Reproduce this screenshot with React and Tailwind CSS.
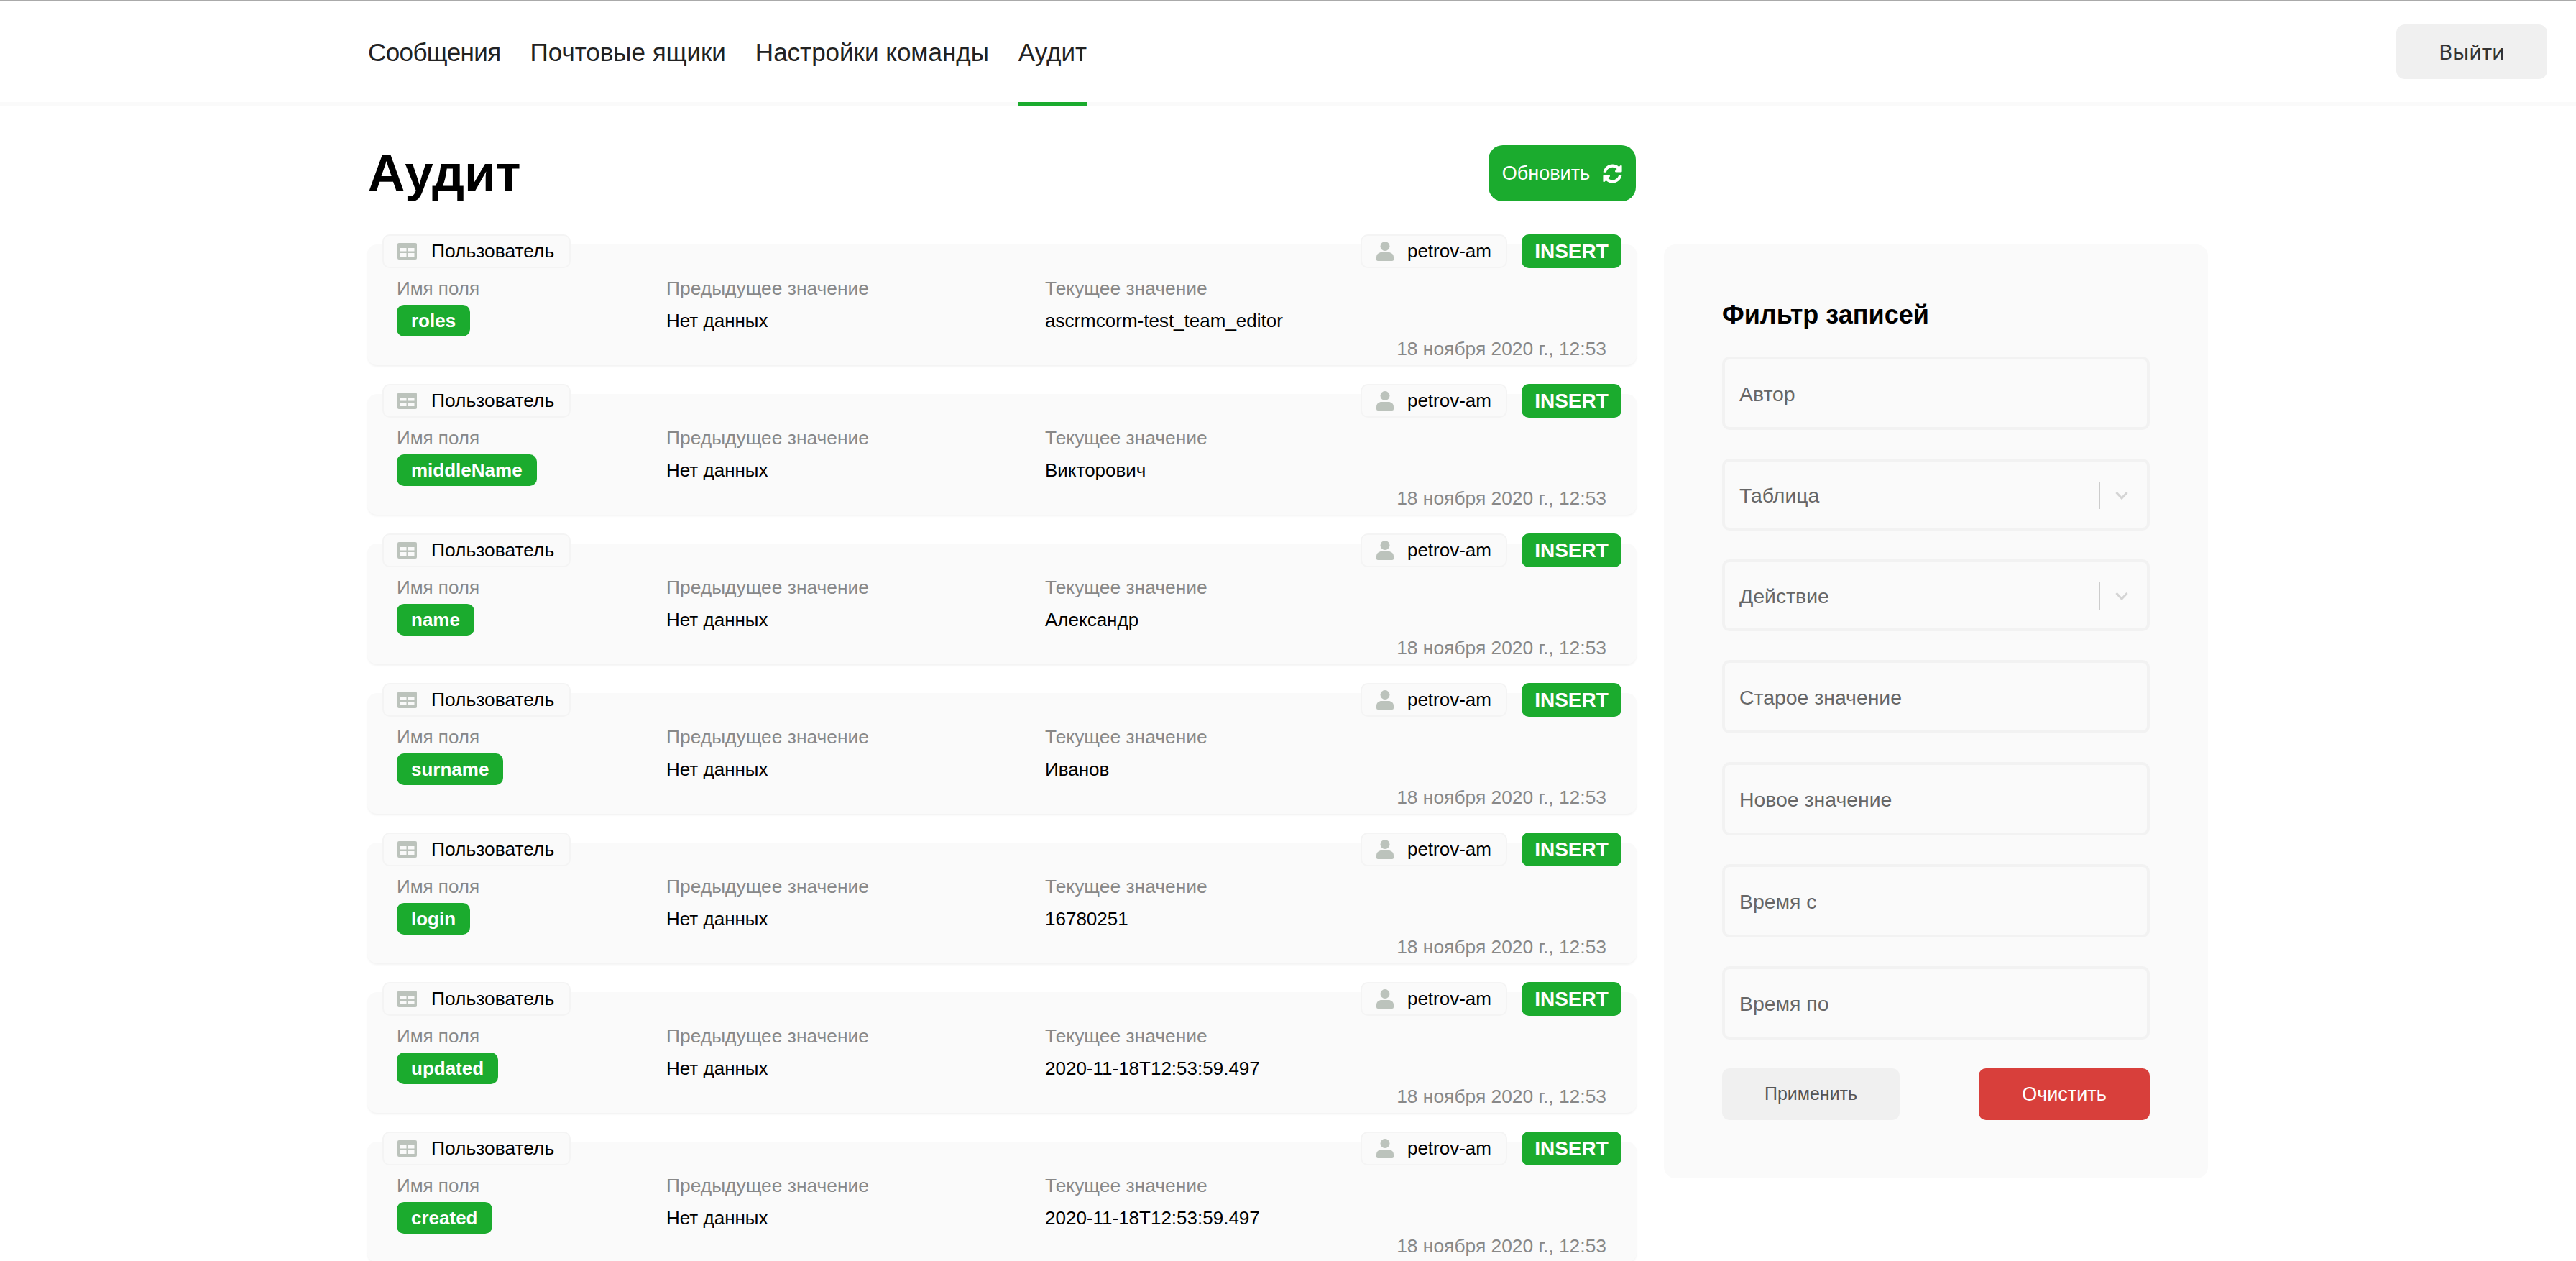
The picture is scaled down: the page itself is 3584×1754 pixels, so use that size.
import React from 'react';
import { FaSyncAlt } from 'react-icons/fa';

const rows = [
  { field: 'roles', value: 'ascrmcorm-test_team_editor' },
  { field: 'middleName', value: 'Викторович' },
  { field: 'name', value: 'Александр' },
  { field: 'surname', value: 'Иванов' },
  { field: 'login', value: '16780251' },
  { field: 'updated', value: '2020-11-18T12:53:59.497' },
  { field: 'created', value: '2020-11-18T12:53:59.497' },
];

function TableIcon() {
  return (
    <svg viewBox="0 0 27 23" className="w-[27px] h-[23px] shrink-0" fill="#bcc3bc">
      <path
        fillRule="evenodd"
        d="M2 0h23a2 2 0 0 1 2 2v19a2 2 0 0 1-2 2H2a2 2 0 0 1-2-2V2a2 2 0 0 1 2-2zM3.500 7v4.500h9V7h-9zm11 0v4.500h9V7h-9zM3.500 14v5h9v-5h-9zm11 0v5h9v-5h-9z"
      />
    </svg>
  );
}

function UserIcon() {
  return (
    <svg viewBox="0 0 24 27" className="w-[24px] h-[27px] shrink-0" fill="#bcc3bc">
      <circle cx="12" cy="6.500" r="6.500" />
      <path d="M0 22c0-5 4-7 7-7h10c3 0 7 2 7 7v3a2 2 0 0 1-2 2H2a2 2 0 0 1-2-2z" />
    </svg>
  );
}

function Chip({ children }) {
  return (
    <div className="h-[47px] flex items-center bg-[#fafafa] border-2 border-[#f4f4f4] rounded-[10px] text-[26px] text-black">
      {children}
    </div>
  );
}

function AuditRow({ field, value }) {
  return (
    <div className="h-[168px] shrink-0 bg-[#fafafa] rounded-[14px] shadow-[0_2px_3px_rgba(0,0,0,0.05)]">
      <div className="flex justify-between px-[21px] -mt-[14px]">
        <Chip>
          <div className="pl-[19px] pr-[21px] flex items-center gap-[20px] text-[26.4px]">
            <TableIcon />
            <span>Пользователь</span>
          </div>
        </Chip>
        <div className="flex gap-[20px]">
          <Chip>
            <div className="pl-[20px] pr-[20px] flex items-center gap-[19px]">
              <UserIcon />
              <span>petrov-am</span>
            </div>
          </Chip>
          <div className="w-[139px] h-[47px] flex items-center justify-center bg-[#1bab2e] rounded-[10px] text-white font-bold text-[28px]">
            INSERT
          </div>
        </div>
      </div>
      <div className="flex pl-[41px] mt-[13px] text-[26px] leading-[30px]">
        <div className="w-[375px]">
          <div className="text-[#888888]">Имя поля</div>
          <div className="mt-[8px] inline-block h-[44px] leading-[44px] px-[20px] bg-[#1bab2e] rounded-[10px] text-white font-bold">
            {field}
          </div>
        </div>
        <div className="w-[527px]">
          <div className="text-[#888888] text-[26.4px]">Предыдущее значение</div>
          <div className="mt-[15px] text-black">Нет данных</div>
        </div>
        <div>
          <div className="text-[#888888] text-[26.4px]">Текущее значение</div>
          <div className="mt-[15px] text-black">{value}</div>
        </div>
      </div>
      <div className="pr-[42px] mt-[2px] text-right text-[26.4px] leading-[30px] text-[#888888]">
        18 ноября 2020 г., 12:53
      </div>
    </div>
  );
}

function Field({ label, select, h = 'h-[102px]' }) {
  return (
    <div className={`${h} flex items-center border-4 border-[#f2f2f2] rounded-[10px] pl-[20px] pr-[26px] pt-[2px] text-[28.4px] text-[#666666]`}>
      <span className="flex-1">{label}</span>
      {select && (
        <div className="flex items-center gap-[21px]">
          <div className="w-[2px] h-[38px] bg-[#cccccc]" />
          <svg viewBox="0 0 18 12" className="w-[18px] h-[12px]" fill="none" stroke="#d4d4d4" strokeWidth="3">
            <path d="M1.500 2 9 10l7.500-8" />
          </svg>
        </div>
      )}
    </div>
  );
}

export default function App() {
  return (
    <div className="h-screen overflow-hidden bg-white font-['Liberation_Sans',Arial,sans-serif] border-t-2 border-[#aaaaaa]">
      <header className="h-[146px] border-b-[6px] border-[#fafafa] flex items-stretch justify-between pl-[512px] pr-[40px]">
        <nav className="flex gap-[41px] text-[35px] text-[#222222]">
          <a className="flex items-center pt-[2px] tracking-[-0.6px]">Сообщения</a>
          <a className="flex items-center pt-[2px]">Почтовые ящики</a>
          <a className="flex items-center pt-[2px]">Настройки команды</a>
          <a className="flex items-center pt-[2px] h-[146px] border-b-[6px] border-[#1bab2e]">Аудит</a>
        </nav>
        <button className="mt-[32px] w-[210px] h-[76px] bg-[#f0f0f0] rounded-[12px] text-[30px] text-[#333333] font-['Roboto',sans-serif]">
          Выйти
        </button>
      </header>
      <main className="flex pl-[511px]">
        <div className="w-[1766px]">
          <div className="flex items-center justify-between pt-[54px] pl-[1px] pr-[1px] mb-[46px]">
            <h1 className="text-[71px] font-bold text-black leading-[78px]">Аудит</h1>
            <button className="w-[205px] h-[78px] flex items-center justify-center gap-[18px] bg-[#1bab2e] rounded-[20px] text-white text-[27px]">
              Обновить
              <FaSyncAlt className="w-[27px] h-[27px]" />
            </button>
          </div>
          <div className="flex flex-col gap-[40px] pt-[14px]">
            {rows.map((row) => (
              <AuditRow key={row.field} {...row} />
            ))}
          </div>
        </div>
        <aside className="mt-[192px] ml-[38px] w-[757px] h-[1299px] bg-[#fafafa] rounded-[16px] pt-[81px] pl-[81px] pr-[81px]">
          <h2 className="text-[36px] font-bold text-black leading-[34px] mb-[41px]">Фильтр записей</h2>
          <div className="flex flex-col gap-[40px]">
            <Field label="Автор" />
            <Field label="Таблица" select h="h-[100px]" />
            <Field label="Действие" select h="h-[100px]" />
            <Field label="Старое значение" />
            <Field label="Новое значение" />
            <Field label="Время с" />
            <Field label="Время по" />
          </div>
          <div className="flex justify-between mt-[40px]">
            <button className="w-[247px] h-[72px] bg-[#f0f0f0] rounded-[10px] text-[#555555] text-[25px]">Применить</button>
            <button className="w-[238px] h-[72px] bg-[#d83f3b] rounded-[10px] text-white text-[27px]">Очистить</button>
          </div>
        </aside>
      </main>
    </div>
  );
}
